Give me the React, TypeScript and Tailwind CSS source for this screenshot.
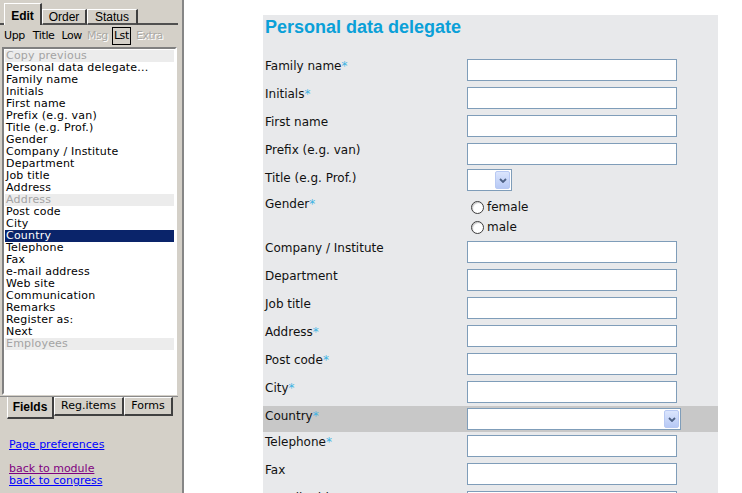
const listItems: { label: string; kind?: "muted" | "selected" }[] = [
  { label: "Copy previous", kind: "muted" },
  { label: "Personal data delegate..." },
  { label: "Family name" },
  { label: "Initials" },
  { label: "First name" },
  { label: "Prefix (e.g. van)" },
  { label: "Title (e.g. Prof.)" },
  { label: "Gender" },
  { label: "Company / Institute" },
  { label: "Department" },
  { label: "Job title" },
  { label: "Address" },
  { label: "Address", kind: "muted" },
  { label: "Post code" },
  { label: "City" },
  { label: "Country", kind: "selected" },
  { label: "Telephone" },
  { label: "Fax" },
  { label: "e-mail address" },
  { label: "Web site" },
  { label: "Communication" },
  { label: "Remarks" },
  { label: "Register as:" },
  { label: "Next" },
  { label: "Employees", kind: "muted" },
];

type Row = {
  label: string;
  req?: boolean;
  kind: "text" | "select" | "small-select" | "radio";
  h: string;
};

const rows: Row[] = [
  { label: "Family name", req: true, kind: "text", h: "h-[28px]" },
  { label: "Initials", req: true, kind: "text", h: "h-[28px]" },
  { label: "First name", kind: "text", h: "h-[28px]" },
  { label: "Prefix (e.g. van)", kind: "text", h: "h-[28px]" },
  { label: "Title (e.g. Prof.)", kind: "small-select", h: "h-[26px]" },
  { label: "Gender", req: true, kind: "radio", h: "h-[44px]" },
  { label: "Company / Institute", kind: "text", h: "h-[28px]" },
  { label: "Department", kind: "text", h: "h-[28px]" },
  { label: "Job title", kind: "text", h: "h-[28px]" },
  { label: "Address", req: true, kind: "text", h: "h-[28px]" },
  { label: "Post code", req: true, kind: "text", h: "h-[28px]" },
  { label: "City", req: true, kind: "text", h: "h-[26px]" },
  { label: "Country", req: true, kind: "select", h: "h-[28px]" },
  { label: "Telephone", req: true, kind: "text", h: "h-[28px]" },
  { label: "Fax", kind: "text", h: "h-[28px]" },
  { label: "e-mail address", req: true, kind: "text", h: "h-[28px]" },
];

function DropButton() {
  return (
    <div className="flex h-[18px] w-[15px] items-center justify-center rounded-[2px] border border-[#b8c9f3] bg-gradient-to-b from-[#dbe5fd] to-[#b7c9f5]">
      <svg width="8" height="5" viewBox="0 0 8 5">
        <path d="M1 1 L4 4 L7 1" fill="none" stroke="#4d6185" strokeWidth="1.8" />
      </svg>
    </div>
  );
}

function Radio({ label }: { label: string }) {
  return (
    <div className="flex h-[20px] items-center">
      <span className="ml-[4px] h-[13px] w-[13px] rounded-full border border-[#3d3d3d] bg-white shadow-[inset_1px_1px_1px_#c8c8c8]" />
      <span className="ml-[3px] text-[12px] text-[#111]">{label}</span>
    </div>
  );
}

function FormRow({ row }: { row: Row }) {
  const highlight = row.kind === "select";
  return (
    <div className={`${row.h} flex items-start`}>
      <div
        className={`flex w-full items-start ${highlight ? "h-[26px] bg-[#c8c8c8]" : ""}`}
      >
        <div
          className={`w-[204px] pl-[2px] text-[12px] leading-[14px] text-[#111] ${
            highlight ? "pt-[3px]" : "pt-[1px]"
          }`}
        >
          {row.label}
          {row.req && <span className="text-[#3fb3e3]">*</span>}
        </div>
        {row.kind === "text" && (
          <div className="mt-[1px] h-[22px] w-[210px] border border-[#7f9db9] bg-white" />
        )}
        {row.kind === "select" && (
          <div className="mt-[2px] flex h-[22px] w-[214px] items-center justify-end border border-[#7f9db9] bg-white pr-[1px]">
            <DropButton />
          </div>
        )}
        {row.kind === "small-select" && (
          <div className="mt-[-1px] flex h-[22px] w-[45px] items-center justify-end border border-[#7f9db9] bg-white pr-[1px]">
            <DropButton />
          </div>
        )}
        {row.kind === "radio" && (
          <div className="pt-[1px]">
            <Radio label="female" />
            <Radio label="male" />
          </div>
        )}
      </div>
    </div>
  );
}

export default function App() {
  return (
    <div className="flex h-[493px] w-[742px] overflow-hidden bg-white font-['DejaVu_Sans',sans-serif]">
      {/* left panel */}
      <div className="flex h-full w-[184px] shrink-0 flex-col border-r-2 border-[#868686] bg-[#d4d0c8]">
        {/* top tabs */}
        <div className="flex h-[25px] items-end pr-[4px] font-['Liberation_Sans',sans-serif] text-[12px]">
          <div className="h-[2px] w-[4px] bg-[#505050]" />
          <div className="flex h-[22px] w-[38px] justify-center border-l border-t border-r-2 border-l-white border-t-white border-r-[#404040] pt-[3px] font-bold">
            Edit
          </div>
          <div className="flex h-[16px] w-[45px] justify-center border-l border-t border-r-2 border-b-2 border-l-white border-t-white border-r-[#404040] border-b-[#505050] leading-[12px] pt-[1px]">
            Order
          </div>
          <div className="flex h-[16px] w-[51px] justify-center border-l border-t border-r-2 border-b-2 border-l-white border-t-white border-r-[#404040] border-b-[#505050] leading-[12px] pt-[1px]">
            Status
          </div>
          <div className="h-[2px] flex-1 bg-[#505050]" />
        </div>

        {/* toolbar */}
        <div className="flex h-[22px] items-center pl-[4px] text-[11px] tracking-[-0.4px]">
          <span>Upp</span>
          <span className="ml-[8px]">Title</span>
          <span className="ml-[7px]">Low</span>
          <span className="ml-[5px] text-[#aaa8a4] [text-shadow:1px_1px_0_#fff]">Msg</span>
          <span className="ml-[4px] flex h-[18px] w-[19px] items-center justify-center border border-black">
            Lst
          </span>
          <span className="ml-[5px] text-[#aaa8a4] [text-shadow:1px_1px_0_#fff]">Extra</span>
        </div>

        {/* list */}
        <div className="ml-[2px] h-[348px] w-[175px] border-2 border-t-[#808080] border-l-[#808080] border-b-white border-r-white bg-white pt-[1px]">
          {listItems.map((item, i) => (
            <div
              key={i}
              className={`mr-[1px] ml-[1px] h-[12px] pl-[1px] text-[11px] leading-[12px] tracking-[0.2px] whitespace-nowrap ${
                item.kind === "muted"
                  ? "bg-[#ececec] text-[#a3a3a3]"
                  : item.kind === "selected"
                    ? "bg-[#0a246a] text-white"
                    : "text-black"
              }`}
            >
              {item.label}
            </div>
          ))}
        </div>

        {/* bottom tabs */}
        <div className="mt-[1px] h-[1px] w-[178px] bg-[#8a8a8a]" />
        <div className="flex pl-[7px] text-[11px]">
          <div className="flex h-[22px] w-[47px] items-center justify-center border-l border-r-2 border-b-2 border-l-white border-r-[#404040] border-b-[#404040] font-['Liberation_Sans',sans-serif] text-[12px] font-bold">
            Fields
          </div>
          <div className="flex h-[19px] w-[70px] items-center justify-center border-l border-t border-r-2 border-b-2 border-l-white border-t-white border-r-[#404040] border-b-[#404040]">
            Reg.items
          </div>
          <div className="flex h-[19px] w-[49px] items-center justify-center border-l border-t border-r-2 border-b-2 border-l-white border-t-white border-r-[#404040] border-b-[#404040]">
            Forms
          </div>
        </div>

        {/* links */}
        <div className="mt-[20px] flex flex-col pl-[9px] text-[11px] leading-[12px]">
          <a className="text-[#0000ff] underline">Page preferences</a>
          <a className="mt-[12px] text-[#800080] underline">back to module</a>
          <a className="text-[#0000ff] underline">back to congress</a>
        </div>
      </div>

      {/* main */}
      <div className="flex-1">
        <div className="ml-[79px] mt-[15px] h-[478px] w-[455px] bg-[#e8e9eb]">
          <h1 className="pl-[2px] pt-[1px] font-['Liberation_Sans',sans-serif] text-[18px] leading-[22px] font-bold text-[#0aa0d8]">
            Personal data delegate
          </h1>
          <div className="mt-[20px] flex flex-col">
            {rows.map((row) => (
              <FormRow key={row.label} row={row} />
            ))}
          </div>
        </div>
      </div>
    </div>
  );
}
